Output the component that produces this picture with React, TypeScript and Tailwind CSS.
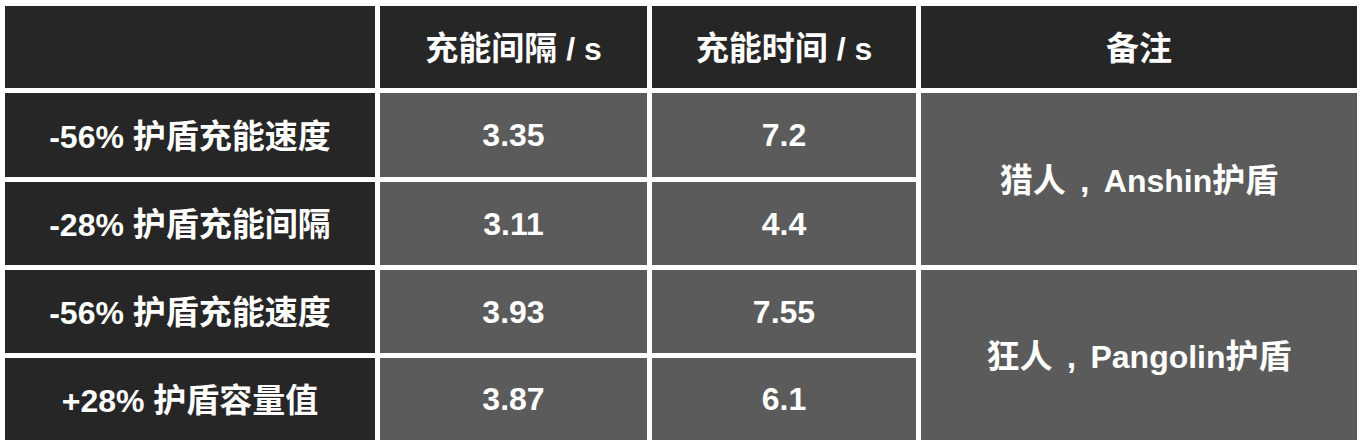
import React from "react";

const font = { fontFamily: '"Liberation Sans", Arial, "Noto Sans CJK SC", sans-serif' };

function Txt({ text }: { text: string }) {
  const parts = text.split(/([\u3000-\u9fff\uff00-\uffef]+)/).filter((p) => p.length > 0);
  return (
    <span className="whitespace-pre">
      {parts.map((p, i) =>
        /[\u3000-\u9fff\uff00-\uffef]/.test(p) ? (
          <span key={i} className="text-[33px]" style={{ fontFamily: '"Noto Sans CJK SC", sans-serif' }}>
            {p.split("").map((ch, j) =>
              ch === "，" ? (
                <span key={j} className="inline-block w-[38px] text-center text-[34px]" style={{ fontFamily: '"Liberation Sans", Arial, sans-serif' }}>
                  ,
                </span>
              ) : (
                ch
              )
            )}
          </span>
        ) : (
          <span key={i}>{p}</span>
        )
      )}
    </span>
  );
}

function Cell({ text, dark, className = "" }: { text?: string; dark?: boolean; className?: string }) {
  return (
    <div
      className={`flex items-center justify-center text-white font-bold text-[32px] leading-none ${dark ? "bg-[#262626]" : "bg-[#5b5b5b]"} ${className}`}
    >
      {text ? <Txt text={text} /> : null}
    </div>
  );
}

export default function App() {
  return (
    <div className="w-[1363px] h-[447px] bg-white pt-[6px] pl-[5px]" style={font}>
      <div className="grid grid-cols-[370px_267px_264px_436px] grid-rows-[82px_84px_83px_83px_82px] gap-x-[5px] gap-y-[5px]">
        <Cell dark />
        <Cell dark text="充能间隔 / s" />
        <Cell dark text="充能时间 / s" />
        <Cell dark text="备注" />

        <Cell dark text="-56% 护盾充能速度" />
        <Cell text="3.35" />
        <Cell text="7.2" />
        <Cell className="row-span-2" text="猎人，Anshin护盾" />

        <Cell dark text="-28% 护盾充能间隔" />
        <Cell text="3.11" />
        <Cell text="4.4" />

        <Cell dark text="-56% 护盾充能速度" />
        <Cell text="3.93" />
        <Cell text="7.55" />
        <Cell className="row-span-2" text="狂人，Pangolin护盾" />

        <Cell dark text="+28% 护盾容量值" />
        <Cell text="3.87" />
        <Cell text="6.1" />
      </div>
    </div>
  );
}
